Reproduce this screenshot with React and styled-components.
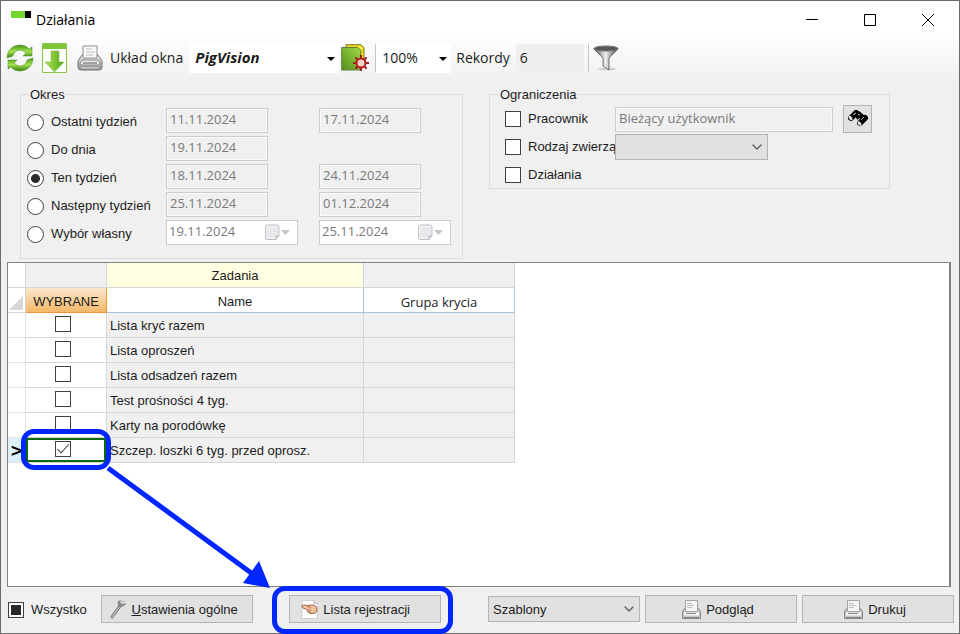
import React from "react";
import styled, { createGlobalStyle } from "styled-components";
import { ChevronDown } from "lucide-react";

const GlobalStyle = createGlobalStyle`
  *,
  *::before,
  *::after {
    box-sizing: border-box;
  }

  body {
    margin: 0;
    background: #f0f0f0;
    color: #1c1c1c;
    font-family: "Liberation Sans", Arial, sans-serif;
    font-size: 13px;
  }

  input,
  select,
  button {
    margin: 0;
    font: inherit;
    color: inherit;
  }
`;

const uiFont = `"Open Sans", "Noto Sans", sans-serif`;
const blue = "#0026ff";

const Window = styled.div`
  display: flex;
  flex-direction: column;
  min-height: 100vh;
  border: 1px solid #6d6a6b;
`;

const TitleBar = styled.header`
  display: flex;
  align-items: center;
  height: 38px;
  padding: 0 2px 0 10px;
  background: #ffffff;
  font-family: ${uiFont};
`;

const AppMark = styled.svg`
  align-self: flex-start;
  margin-top: 10px;
`;

const Title = styled.h1`
  flex: 1;
  margin: 0 0 0 5px;
  padding-bottom: 2px;
  font-size: 14px;
  font-weight: 400;
  color: #000000;
`;

const WindowButton = styled.button`
  display: flex;
  align-items: center;
  justify-content: center;
  width: 58px;
  height: 38px;
  padding: 0;
  border: none;
  background: none;
`;

const Toolbar = styled.div`
  display: flex;
  align-items: center;
  height: 41px;
  padding: 0 5px 3px;
  background: linear-gradient(#fdfdfd, #f0f0f0);
  font-family: ${uiFont};
  font-size: 14px;
`;

const IconButton = styled.button`
  display: flex;
  align-items: center;
  justify-content: center;
  flex: none;
  width: ${props => props.$width || 35}px;
  height: 30px;
  padding: 0;
  border: none;
  background: none;
`;

const ToolLabel = styled.label`
  margin: 0 6px 0 5px;
  padding-bottom: 2px;
`;

const ToolSelectWrap = styled.div`
  position: relative;
  width: ${props => props.$width}px;

  > svg {
    position: absolute;
    right: 4px;
    top: 13px;
    pointer-events: none;
  }
`;

const ToolSelect = styled.select`
  display: block;
  appearance: none;
  width: 100%;
  height: 29px;
  padding: 0 0 2px 6px;
  border: none;
  border-radius: 0;
  background: #ffffff;
  font-size: ${props => (props.$strong ? 15 : 14)}px;
  font-weight: ${props => (props.$strong ? 700 : 400)};
  font-style: ${props => (props.$strong ? "italic" : "normal")};
`;

const Separator = styled.span`
  width: 1px;
  height: 28px;
  margin-left: 4px;
  background: #c4c4c4;
`;

const RecordsField = styled.input`
  width: 68px;
  height: 28px;
  padding: 0 4px 2px;
  border: none;
  background: #efefef;
`;

const Filters = styled.section`
  display: flex;
  align-items: flex-start;
  gap: 26px;
  padding: 7px 19px 3px;
`;

const Group = styled.fieldset`
  flex: 0 1 443px;
  min-width: 0;
  margin: 0;
  padding: 6px 6px 10px;
  border: 1px solid #dcdcdc;
`;

const LimitGroup = styled(Group)`
  flex-basis: 401px;
  padding: 4px 6px 0 7px;
`;

const Legend = styled.legend`
  margin-left: 2px;
  padding: 0 1px;
  line-height: 15px;
`;

const PeriodRow = styled.div`
  display: grid;
  grid-template-columns: 139px 132px 132px;
  column-gap: 0;
  align-items: center;
  height: 25px;
  margin-bottom: 3px;

  > label {
    padding-top: 3px;
  }

  > *:nth-child(3) {
    margin-left: 21px;
  }
`;

const LimitRow = styled.div`
  display: flex;
  align-items: center;
  height: 26px;
  padding-left: 8px;

  & + & {
    margin-top: 2px;
  }
`;

const Option = styled.label`
  display: flex;
  align-items: center;
  gap: 7px;
  flex: none;
  width: ${props => (props.$width ? props.$width + "px" : "auto")};
  line-height: 18px;
  white-space: nowrap;
`;

const Radio = styled.input.attrs({ type: "radio" })`
  appearance: none;
  flex: none;
  width: 17px;
  height: 17px;
  border: 1px solid #404040;
  border-radius: 50%;
  background: #ffffff;

  &:checked {
    background: radial-gradient(circle, #2b2b2b 4px, #ffffff 5px);
  }
`;

const Checkbox = styled.input.attrs({ type: "checkbox" })`
  appearance: none;
  display: grid;
  place-items: center;
  flex: none;
  width: 16px;
  height: 16px;
  border: 1px solid #404040;
  background: #ffffff;

  &:checked::before {
    content: "";
    width: 6px;
    height: 12px;
    margin-top: -4px;
    border: solid #404040;
    border-width: 0 1px 1px 0;
    transform: rotate(42deg);
  }

  &:indeterminate::before {
    content: "";
    width: 10px;
    height: 10px;
    background: #2b2b2b;
  }
`;

const Field = styled.input`
  width: ${props => props.$width || 102}px;
  height: 25px;
  padding: 0 3px 3px;
  border: 1px solid #cccccc;
  background: #f0f0f0;
  box-shadow: inset 0 0 0 1px #fafafa;
  font-family: ${uiFont};
  color: #7a7a7a;
`;

const PickerBox = styled.div`
  display: flex;
  align-items: center;
  width: 132px;
  height: 25px;
  border: 1px solid #cccccc;
  background: #ffffff;

  input {
    flex: 1;
    min-width: 0;
    padding: 0 0 3px 2px;
    border: none;
    background: none;
    font-family: ${uiFont};
    color: #7a7a7a;
  }

  button {
    display: flex;
    padding: 0 7px 0 0;
    border: none;
    background: none;
  }
`;

const SelectWrap = styled.div`
  position: relative;
  flex: 0 1 ${props => props.$width}px;

  > svg {
    position: absolute;
    right: 3px;
    top: 5px;
    color: #606060;
    pointer-events: none;
  }
`;

const Select = styled.select`
  display: block;
  appearance: none;
  width: 100%;
  height: 26px;
  padding: 0 20px 0 4px;
  border: 1px solid #b4b4b4;
  border-radius: 0;
  background: #e1e1e1;
  opacity: 1;
`;

const Button = styled.button`
  display: flex;
  align-items: center;
  justify-content: center;
  gap: 5px;
  width: ${props => props.$width || 152}px;
  height: 28px;
  padding: 0 6px 0 0;
  border: 1px solid #b4b4b4;
  background: #e1e1e1;
  white-space: nowrap;
`;

const ListButton = styled(Button)`
  padding-right: 18px;
`;

const SearchButton = styled(Button)`
  flex: none;
  margin-left: 10px;
  padding: 0;
`;

const GridPane = styled.main`
  flex: 1;
  margin: 0 8px 0 6px;
  border: 1px solid #828282;
  border-right-width: 2px;
  background: #ffffff;
`;

const Table = styled.table`
  width: 507px;
  table-layout: fixed;
  border-collapse: separate;
  border-spacing: 0;

  th,
  td {
    height: 25px;
    padding: 0 0 0 3px;
    border-right: 1px solid #d6d6d6;
    border-bottom: 1px solid #d6d6d6;
    background: #f0f0f0;
    font-weight: 400;
    text-align: left;
    white-space: nowrap;
  }
`;

const HeadCell = styled.th`
  && {
    padding: 0;
    background: ${props => props.$fill || "#ffffff"};
    border-color: ${props => props.$line || "#d6d6d6"};
    text-align: center;
  }
`;

const ColumnHead = styled(HeadCell)`
  && {
    padding-top: 3px;
    font-family: ${props => (props.$ui ? uiFont : "inherit")};
  }
`;

const MarkerCell = styled.td`
  && {
    padding: 0;
    border-color: #e4e4e4;
    background: ${props => (props.$current ? "#dcf0fa" : "#ffffff")};
    font: 700 19px/19px "Liberation Mono", monospace;
    color: #000000;
    text-align: center;
    vertical-align: bottom;
  }
`;

const CheckCell = styled.td`
  && {
    position: relative;
    padding: 0 7px 0 0;
    background: #ffffff;
    box-shadow: ${props => (props.$current ? "inset 0 0 0 2px #0b6b0b" : "none")};
  }

  > input {
    margin: -2px auto 0;
  }
`;

const Highlight = styled.span`
  position: absolute;
  inset: ${props => props.$inset};
  z-index: 1;
  border: 5px solid ${blue};
  border-radius: 13px;
  pointer-events: none;
`;

const Arrow = styled.svg`
  position: absolute;
  left: 76px;
  top: 22px;
  z-index: 2;
  pointer-events: none;
`;

const Footer = styled.footer`
  display: flex;
  align-items: center;
  height: 46px;
  padding: 0 5px 2px 7px;

  > label {
    padding-top: 2px;
  }
`;

const SettingsButton = styled(Button)`
  margin-left: 14px;
`;

const Marked = styled.div`
  position: relative;
  margin-left: 36px;
`;

const PrintActions = styled.div`
  display: flex;
  flex: 1;
  align-items: center;
  justify-content: flex-end;
  gap: 5px;
`;

const CornerMark = styled.svg`
  display: block;
  margin: 5px 0 0 1px;
`;

const DropArrow = () => (
  <svg width="8" height="4" viewBox="0 0 8 4">
    <path d="M0 0h8L4 4z" fill="#000" />
  </svg>
);

const RefreshIcon = () => (
  <svg width="28" height="28" viewBox="0 0 28 28">
    <defs>
      <linearGradient id="refresh" x1="0" y1="0" x2="0" y2="1">
        <stop offset="0" stopColor="#3f9015" />
        <stop offset="0.5" stopColor="#a5e34f" />
        <stop offset="1" stopColor="#348010" />
      </linearGradient>
    </defs>
    <g fill="url(#refresh)" stroke="#4f8f25" strokeWidth="0.500">
      <path d="M1 14C1 6 7 1 14 1c4 0 7 1.500 9 4l3-2v9h-9l3-3c-5-5-12-3-13 3z" />
      <path d="M27 14c0 8-6 13-13 13-4 0-7-1.500-9-4l-3 2v-9h9l-3 3c5 5 12 3 13-3z" />
    </g>
  </svg>
);

const DownloadIcon = () => (
  <svg width="25" height="30" viewBox="0 0 25 30">
    <defs>
      <linearGradient id="download" x1="0" y1="0" x2="1" y2="0">
        <stop offset="0" stopColor="#b4e34c" />
        <stop offset="1" stopColor="#4ba422" />
      </linearGradient>
    </defs>
    <path d="M.5 .5h24v29H.5z" fill="#fff" stroke="#8bc34a" />
    <path d="M1 1h23v5H1z" fill="#7cc63a" />
    <path d="M9 8h8v11h5l-9.500 10L3 19h6z" fill="url(#download)" stroke="#85bd4b" strokeWidth="0.600" />
  </svg>
);

const PrinterIcon = ({ size = 26 }) => (
  <svg width={size} height={size} viewBox="0 0 26 26">
    <defs>
      <linearGradient id="printer" x1="0" y1="0" x2="0" y2="1">
        <stop offset="0" stopColor="#f5f5f5" />
        <stop offset="1" stopColor="#898989" />
      </linearGradient>
    </defs>
    <path d="M5 10h16l4 6v6q0 3-3 3H4q-3 0-3-3v-6z" fill="url(#printer)" stroke="#777" />
    <path d="M6 1h14v12H6z" fill="#fafafa" stroke="#8d8d8d" />
    <path d="M9 4h6M9 7h9M9 10h7" stroke="#bbb" fill="none" />
    <path d="M5 15h16l2 3q0 2-2 2H5q-2 0-2-2z" fill="#e9e9e9" stroke="#8c8c8c" />
    <path d="M6 18h14" stroke="#555" />
    <path d="M4 23h18" stroke="#ddd" />
  </svg>
);

const FormPrinterIcon = () => (
  <svg width="19" height="19" viewBox="0 0 19 19">
    <path d="M.5 11.500l2-3h14l2 3v7H.5z" fill="#c4c4c4" stroke="#858585" />
    <path d="M3.500 .5h12v11h-12z" fill="#f4f4f4" stroke="#a3a3a3" />
    <path d="M5 3.500h5M5 5.500h7M5 7.500h5" stroke="#bdbdbd" />
    <path d="M2 12.500h15v3H2z" fill="#f8f8f8" />
    <path d="M4 13.500h10M2 17.500h15" stroke="#8a8a8a" />
  </svg>
);

const LayoutIcon = () => (
  <svg width="28" height="28" viewBox="0 0 28 28">
    <defs>
      <linearGradient id="page" x1="1" y1="0" x2="0" y2="1">
        <stop offset="0" stopColor="#a0dc46" />
        <stop offset="1" stopColor="#548c1c" />
      </linearGradient>
    </defs>
    <path d="M5 .700h15l3 3V19H5z" fill="#f2d817" stroke="#777a26" />
    <path d="M18 1l4 4h-3z" fill="#fff36b" />
    <path d="M.700 3.500h16l3 3V26H.700z" fill="url(#page)" stroke="#5e7e45" />
    <g stroke="#a31b1b" strokeWidth="2">
      <path d="M20 11v4M20 23v4M12 19h4M24 19h4M14.400 13.400l2.600 2.600M23 22l2.600 2.600M14.400 24.600l2.600-2.600M23 16l2.600-2.600" />
    </g>
    <circle cx="20" cy="19" r="4.500" fill="#f6d0c8" stroke="#b22020" strokeWidth="2" />
  </svg>
);

const FunnelIcon = () => (
  <svg width="26" height="26" viewBox="0 0 26 26">
    <defs>
      <linearGradient id="funnel" x1="0" y1="0" x2="1" y2="0">
        <stop offset="0" stopColor="#4c4c4c" />
        <stop offset="0.480" stopColor="#efefef" />
        <stop offset="1" stopColor="#444" />
      </linearGradient>
    </defs>
    <ellipse cx="14" cy="24" rx="9" ry="1.500" fill="#ccc" />
    <path d="M1 4l9 9v8l6 4V13l9-9z" fill="url(#funnel)" stroke="#555" strokeWidth="0.800" />
    <ellipse cx="13" cy="3.500" rx="12" ry="2.500" fill="#525852" stroke="#777" />
  </svg>
);

const BinocularsIcon = () => (
  <svg width="20" height="18" viewBox="0 0 20 18">
    <path d="M3 8l5-5M12 13l5-5" stroke="#000" strokeWidth="6" strokeLinecap="round" />
    <path d="M8 3l3-2 6 5-3 4-3-2-1 2-2-2z" fill="#000" />
    <ellipse cx="2.500" cy="8" rx="1.500" ry="2.500" fill="#e1e1e1" transform="rotate(-40 2.500 8)" />
    <ellipse cx="11.500" cy="13.500" rx="1.500" ry="2.500" fill="#e1e1e1" transform="rotate(-40 11.500 13.500)" />
    <path d="M5 5l3-2M13 10l3-3M10 4l2 1" stroke="#bbb" fill="none" />
  </svg>
);

const CalendarIcon = () => (
  <svg width="25" height="17" viewBox="0 0 25 17">
    <path d="M.5 3q0-2 2-2h10q1.500 0 1.500 2v9l-3 3.500h-9q-1.500 0-1.500-2z" fill="#f1f1f3" stroke="#c3bfc0" />
    <path d="M3 4.500h9v8H3zM3 7h9M3 10h9M6 4.500v8M9 4.500v8" fill="none" stroke="#dde3e8" />
    <path d="M11 15.500V12h3" fill="#d1cccb" stroke="#b9b5b4" />
    <path d="M16 6h9l-4.500 5z" fill="#c6c6bd" />
  </svg>
);

const WrenchIcon = () => (
  <svg width="17" height="20" viewBox="0 0 17 20">
    <path d="M2 18L10 7" stroke="#808080" strokeWidth="3" strokeLinecap="round" />
    <path d="M2 18L10 7" stroke="#d6d6d6" strokeLinecap="round" />
    <path d="M8 2q-1 4 1 6 4 1 7-3l-1-1-3 1-2-2 1-2z" fill="#8b8b8b" />
    <path d="M11 1l1 2 3-1" stroke="#bbb" fill="none" />
  </svg>
);

const HandIcon = () => (
  <svg width="17" height="19" viewBox="0 0 17 19">
    <path d="M1 .5h12l3.500 3v15H1z" fill="#fff" stroke="#d0d0d0" />
    <path d="M13 .5v3h3.500" fill="#ddd" stroke="#c4c4c4" />
    <path d="M1 5.500q2-1 5 0l5-.5q5 0 5 4.500 0 4-4 4H9q-3-1-3-4L2 8Q0 7 1 5.500z" fill="#f2c19b" stroke="#9d6547" />
    <path d="M6 6.500l4 1M7 10h3M8 12h2" stroke="#b4795a" fill="none" />
  </svg>
);

const DatePicker = ({ value, label }) => (
  <PickerBox>
    <input defaultValue={value} aria-label={label} disabled />
    <button type="button" aria-label="Kalendarz" disabled>
      <CalendarIcon />
    </button>
  </PickerBox>
);

const PlainDate = ({ value, label }) => (
  <div>
    <Field defaultValue={value} aria-label={label} disabled />
  </div>
);

const periods = [
  { label: "Ostatni tydzień", from: "11.11.2024", to: "17.11.2024" },
  { label: "Do dnia", from: "19.11.2024" },
  { label: "Ten tydzień", from: "18.11.2024", to: "24.11.2024", checked: true },
  { label: "Następny tydzień", from: "25.11.2024", to: "01.12.2024" },
  { label: "Wybór własny", from: "19.11.2024", to: "25.11.2024", custom: true }
];

const tasks = [
  "Lista kryć razem",
  "Lista oproszeń",
  "Lista odsadzeń razem",
  "Test prośności 4 tyg.",
  "Karty na porodówkę",
  "Szczep. loszki 6 tyg. przed oprosz."
];

const Period = ({ label, from, to, checked, custom }) => {
  const DateField = custom ? DatePicker : PlainDate;
  return (
    <PeriodRow>
      <Option>
        <Radio name="period" defaultChecked={checked} />
        {label}
      </Option>
      <DateField value={from} label={label + " od"} />
      {to && <DateField value={to} label={label + " do"} />}
    </PeriodRow>
  );
};

const TaskRow = ({ name, current }) => (
  <tr>
    <MarkerCell $current={current}>{current && ">"}</MarkerCell>
    <CheckCell $current={current}>
      <Checkbox aria-label={name} defaultChecked={current} />
      {current && (
        <>
          <Highlight $inset="-9px -5px -8px -5px" />
          <Arrow width="170" height="130" viewBox="0 0 170 130">
            <path d="M6 8L152 115" stroke={blue} strokeWidth="5" />
            <path d="M168 128L141 123L157 101z" fill={blue} />
          </Arrow>
        </>
      )}
    </CheckCell>
    <td>{name}</td>
    <td />
  </tr>
);

const App = () => {
  const setMixed = node => {
    if (node) node.indeterminate = true;
  };

  return (
    <Window>
      <GlobalStyle />
      <TitleBar>
        <AppMark width="20" height="7" viewBox="0 0 20 7">
          <path d="M0 0h14v7H0z" fill="#72d62c" />
          <path d="M14 0h6v7h-6z" fill="#000" />
        </AppMark>
        <Title>Działania</Title>
        <WindowButton aria-label="Minimalizuj">
          <svg width="12" height="12" viewBox="0 0 12 12">
            <path d="M0 5.500h12" stroke="#000" />
          </svg>
        </WindowButton>
        <WindowButton aria-label="Maksymalizuj">
          <svg width="12" height="12" viewBox="0 0 12 12">
            <path d="M.5 .5h11v11H.5z" fill="none" stroke="#000" />
          </svg>
        </WindowButton>
        <WindowButton aria-label="Zamknij">
          <svg width="12" height="12" viewBox="0 0 12 12">
            <path d="M0 0l12 12M12 0L0 12" stroke="#000" />
          </svg>
        </WindowButton>
      </TitleBar>

      <Toolbar>
        <IconButton $width={28} aria-label="Odśwież">
          <RefreshIcon />
        </IconButton>
        <IconButton $width={41} aria-label="Pobierz">
          <DownloadIcon />
        </IconButton>
        <IconButton $width={30} aria-label="Drukuj listę">
          <PrinterIcon />
        </IconButton>
        <ToolLabel htmlFor="layout">Układ okna</ToolLabel>
        <ToolSelectWrap $width={150}>
          <ToolSelect id="layout" $strong>
            <option>PigVision</option>
          </ToolSelect>
          <DropArrow />
        </ToolSelectWrap>
        <IconButton $width={32} aria-label="Ustawienia układu">
          <LayoutIcon />
        </IconButton>
        <Separator />
        <ToolSelectWrap $width={75}>
          <ToolSelect aria-label="Powiększenie">
            <option>100%</option>
          </ToolSelect>
          <DropArrow />
        </ToolSelectWrap>
        <ToolLabel htmlFor="records">Rekordy</ToolLabel>
        <RecordsField id="records" defaultValue="6" readOnly />
        <Separator />
        <IconButton aria-label="Filtr">
          <FunnelIcon />
        </IconButton>
      </Toolbar>

      <Filters>
        <Group>
          <Legend>Okres</Legend>
          {periods.map(period => (
            <Period key={period.label} {...period} />
          ))}
        </Group>
        <LimitGroup>
          <Legend>Ograniczenia</Legend>
          <LimitRow>
            <Option $width={110}>
              <Checkbox />
              Pracownik
            </Option>
            <Field
              $width={218}
              defaultValue="Bieżący użytkownik"
              aria-label="Nazwa pracownika"
              disabled
            />
            <SearchButton $width={29} aria-label="Szukaj">
              <BinocularsIcon />
            </SearchButton>
          </LimitRow>
          <LimitRow>
            <Option $width={110}>
              <Checkbox />
              Rodzaj zwierzą
            </Option>
            <SelectWrap $width={153}>
              <Select aria-label="Wybór rodzaju" disabled />
              <ChevronDown size={16} strokeWidth={2} />
            </SelectWrap>
          </LimitRow>
          <LimitRow>
            <Option>
              <Checkbox />
              Działania
            </Option>
          </LimitRow>
        </LimitGroup>
      </Filters>

      <GridPane>
        <Table>
          <colgroup>
            <col style={{ width: 18 }} />
            <col style={{ width: 81 }} />
            <col style={{ width: 257 }} />
            <col />
          </colgroup>
          <thead>
            <tr>
              <HeadCell />
              <HeadCell $fill="#f0f0f0" />
              <HeadCell $fill="#ffffe1">Zadania</HeadCell>
              <HeadCell $fill="#f0f0f0" />
            </tr>
            <tr>
              <HeadCell>
                <CornerMark width="14" height="14" viewBox="0 0 14 14">
                  <path d="M14 0v14H0z" fill="#d6d6d6" />
                </CornerMark>
              </HeadCell>
              <ColumnHead $fill="linear-gradient(#fbe8cd, #f3b869)" $line="#f29536">
                WYBRANE
              </ColumnHead>
              <ColumnHead $line="#a9c3dc">Name</ColumnHead>
              <ColumnHead $line="#a9c3dc" $ui>
                Grupa krycia
              </ColumnHead>
            </tr>
          </thead>
          <tbody>
            {tasks.map((name, i) => (
              <TaskRow key={name} name={name} current={i === tasks.length - 1} />
            ))}
          </tbody>
        </Table>
      </GridPane>

      <Footer>
        <Option>
          <Checkbox ref={setMixed} />
          Wszystko
        </Option>
        <SettingsButton>
          <WrenchIcon />
          <span>
            <u>U</u>stawienia ogólne
          </span>
        </SettingsButton>
        <Marked>
          <ListButton>
            <HandIcon />
            Lista rejestracji
          </ListButton>
          <Highlight $inset="-9px -12px -11px -17px" />
        </Marked>
        <PrintActions>
          <SelectWrap $width={152}>
            <Select aria-label="Szablony">
              <option>Szablony</option>
            </Select>
            <ChevronDown size={16} strokeWidth={2} />
          </SelectWrap>
          <Button>
            <FormPrinterIcon />
            Podgląd
          </Button>
          <Button>
            <FormPrinterIcon />
            Drukuj
          </Button>
        </PrintActions>
      </Footer>
    </Window>
  );
};

export default App;
